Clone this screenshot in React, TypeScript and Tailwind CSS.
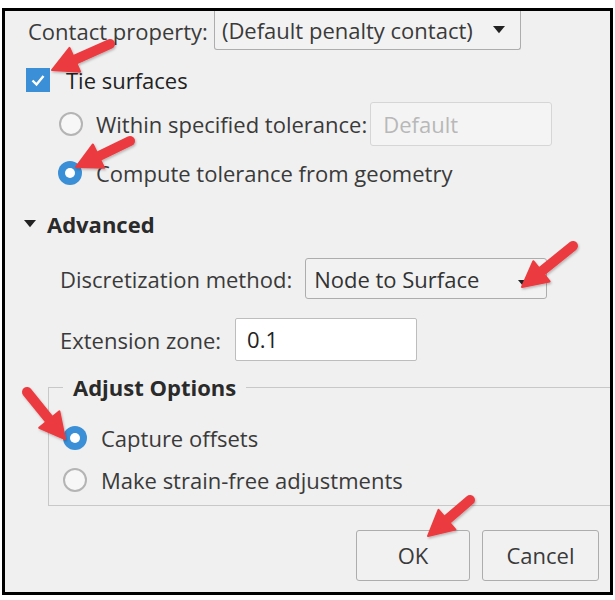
const FONT = "font-['Open_Sans',_'Noto_Sans',_sans-serif]";

type Pt = [number, number];

// red callout arrows, drawn in page coordinates
const ARROWS: { tail: Pt; tip: Pt }[] = [
  { tail: [110, 36], tip: [52, 62] },
  { tail: [130, 133], tip: [76, 159] },
  { tail: [573, 238], tip: [522, 279] },
  { tail: [27, 384], tip: [65, 431] },
  { tail: [470, 492], tip: [428, 528] },
];

function arrowShape(tail: Pt, tip: Pt) {
  const dx = tip[0] - tail[0];
  const dy = tip[1] - tail[1];
  const len = Math.hypot(dx, dy);
  const ux = dx / len;
  const uy = dy / len;
  const nx = -uy;
  const ny = ux;
  const headLen = 25;
  const headHalf = 13;
  const bx = tip[0] - ux * headLen;
  const by = tip[1] - uy * headLen;
  const head = [
    [tip[0], tip[1]],
    [bx + nx * headHalf, by + ny * headHalf],
    [bx - nx * headHalf, by - ny * headHalf],
  ]
    .map((p) => p.join(","))
    .join(" ");
  return { head, shaftEnd: [bx + ux * 4, by + uy * 4] as Pt };
}

function Arrows() {
  return (
    <svg
      className="pointer-events-none absolute left-0 top-0"
      width={615}
      height={600}
      viewBox="0 0 615 600"
    >
      <defs>
        <filter id="sh" x="-20%" y="-20%" width="140%" height="140%">
          <feDropShadow dx="1" dy="1.5" stdDeviation="1.2" floodColor="#000" floodOpacity="0.25" />
        </filter>
      </defs>
      {ARROWS.map(({ tail, tip }, i) => {
        const { head, shaftEnd } = arrowShape(tail, tip);
        return (
          <g key={i} filter="url(#sh)" fill="#ec3b3f" stroke="#ec3b3f">
            <line
              x1={tail[0]}
              y1={tail[1]}
              x2={shaftEnd[0]}
              y2={shaftEnd[1]}
              strokeWidth={10}
              strokeLinecap="round"
            />
            <polygon points={head} strokeWidth={2} strokeLinejoin="round" />
          </g>
        );
      })}
    </svg>
  );
}

function Radio({ checked }: { checked?: boolean }) {
  if (checked) {
    return (
      <span className="flex h-[24px] w-[24px] shrink-0 items-center justify-center rounded-full bg-[#3a8fd6]">
        <span className="h-[10px] w-[10px] rounded-full bg-white" />
      </span>
    );
  }
  return <span className="h-[24px] w-[24px] shrink-0 rounded-full border-2 border-[#b4b4b4] bg-[#f7f7f7]" />;
}

function Caret({ w = 12 }: { w?: number }) {
  return (
    <svg width={w} height={w * 0.6} viewBox="0 0 10 6" className="shrink-0">
      <path d="M0 0 H10 L5 6 Z" fill="#222" />
    </svg>
  );
}

export default function App() {
  return (
    <div className={`relative h-[600px] w-[615px] bg-white ${FONT} text-[22px] text-[#3a3a3a]`}>
      <div className="ml-[2px] mt-[8px] h-[587px] w-[611px] overflow-hidden border-[3px] border-black bg-[#f0f0f0]">
        {/* contact property */}
        <div className="flex h-[39px] items-center pl-[23px]">
          <span className="leading-none">Contact property:</span>
          <div className="ml-[6px] flex h-[39px] w-[307px] items-center justify-between rounded-b-[3px] border border-t-0 border-[#adadad] bg-[#f2f2f2] pl-[7px] pr-[15px]">
            <span className="leading-none">(Default penalty contact)</span>
            <Caret w={12} />
          </div>
        </div>

        {/* tie surfaces */}
        <div className="mt-[18px] flex h-[24px] items-center pl-[21px]">
          <span className="flex h-[24px] w-[24px] items-center justify-center bg-[#3a8fd6]">
            <svg width="16" height="16" viewBox="0 0 16 16">
              <path d="M2.5 8.5 L6.5 12.5 L13.5 4" fill="none" stroke="white" strokeWidth="2.4" />
            </svg>
          </span>
          <span className="ml-[16px] leading-none text-[#222]">Tie surfaces</span>
        </div>

        <div className="mt-[10px] flex h-[44px] items-center pl-[54px]">
          <Radio />
          <span className="ml-[13px] leading-none">Within specified tolerance:</span>
          <div className="ml-[3px] flex h-[44px] w-[182px] items-center rounded-[3px] border border-[#d6d6d6] bg-[#f4f4f4] pl-[12px] text-[#b8b8b8]">
            Default
          </div>
        </div>

        <div className="mt-[12px] flex h-[30px] items-center pl-[53px]">
          <Radio checked />
          <span className="ml-[14px] leading-none">Compute tolerance from geometry</span>
        </div>

        {/* advanced */}
        <div className="mt-[21px] flex h-[30px] items-center pl-[19px]">
          <Caret w={12} />
          <span className="ml-[11px] font-bold leading-none text-[#2a2a2a]">Advanced</span>
        </div>

        <div className="mt-[19px] flex h-[41px] items-center pl-[55px]">
          <span className="leading-none">Discretization method:</span>
          <div className="ml-[13px] flex h-[41px] w-[242px] items-center justify-between rounded-[3px] border border-[#adadad] bg-[#f2f2f2] pl-[8px] pr-[16px]">
            <span className="leading-none text-[#333]">Node to Surface</span>
            <span className="mt-[10px]">
              <Caret w={12} />
            </span>
          </div>
        </div>

        <div className="mt-[19px] flex h-[43px] items-center pl-[55px]">
          <span className="leading-none">Extension zone:</span>
          <div className="ml-[14px] flex h-[43px] w-[182px] items-center rounded-[2px] border border-[#bdbdbd] bg-white pl-[11px] text-[#222]">
            0.1
          </div>
        </div>

        {/* adjust options */}
        <fieldset className="ml-[43px] mt-[12px] h-[133px] w-[600px] border border-r-0 border-[#c8c8c8]">
          <legend className="ml-[14px] px-[10px] font-bold leading-[28px] text-[#2a2a2a]">Adjust Options</legend>
          <div className="mt-[22px] flex h-[30px] items-center pl-[14px]">
            <Radio checked />
            <span className="ml-[14px] leading-none">Capture offsets</span>
          </div>
          <div className="mt-[12px] flex h-[30px] items-center pl-[14px]">
            <Radio />
            <span className="ml-[14px] leading-none">Make strain-free adjustments</span>
          </div>
        </fieldset>

        <div className="mt-[24px] flex justify-end gap-[12px] pr-[11px]">
          <div className="flex h-[51px] w-[114px] items-center justify-center rounded-[3px] border border-[#adadad] bg-[#f1f1f1]">
            OK
          </div>
          <div className="flex h-[51px] w-[117px] items-center justify-center rounded-[3px] border border-[#adadad] bg-[#f1f1f1]">
            Cancel
          </div>
        </div>
      </div>
      <Arrows />
    </div>
  );
}
